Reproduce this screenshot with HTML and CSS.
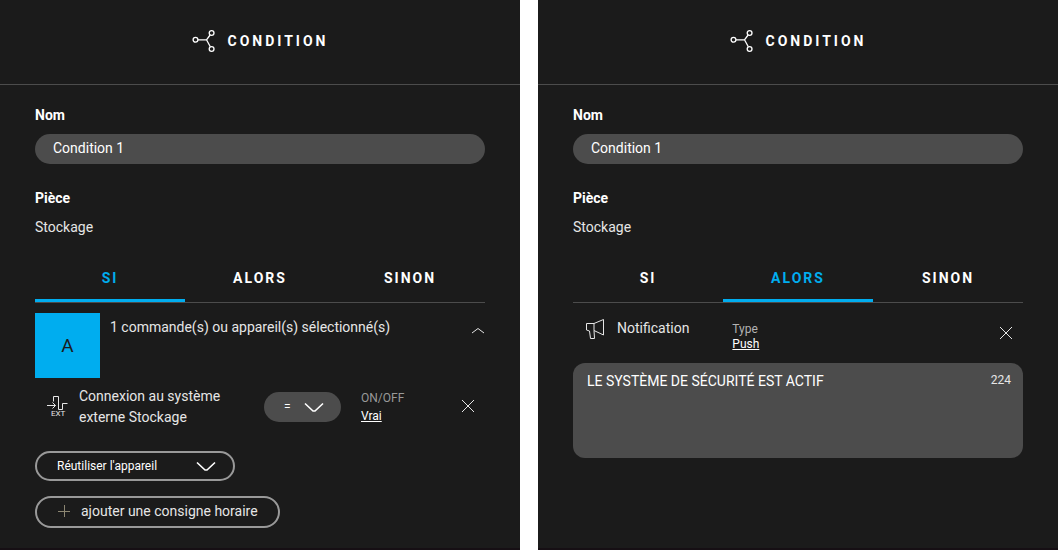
FILE: index.html
```
<!DOCTYPE html>
<html lang="fr">
<head>
  <meta charset="UTF-8">
  <meta name="viewport" content="width=device-width, initial-scale=1.0">
  <title>Condition</title>
  <link rel="stylesheet" href="styles.css">
</head>
<body>
  <main class="panels">
    <section class="panel">
      <header class="panel-header">
        <svg class="logo" width="24" height="24" viewBox="0 0 24 24">
          <circle cx="3.5" cy="10.8" r="2.4"/>
          <circle cx="19.6" cy="4" r="2.4"/>
          <circle cx="19.6" cy="20" r="2.4"/>
          <path d="M6 10.800h8.500l3.600-4.800M14.500 10.800l3.800 7"/>
        </svg>
        <h1>CONDITION</h1>
      </header>
      <div class="panel-body">
        <label class="label" for="nom-si">Nom</label>
        <input class="field" id="nom-si" type="text" value="Condition 1">
        <h2 class="label">Pièce</h2>
        <p class="room">Stockage</p>

        <nav class="tabs">
          <button class="tab active" type="button">SI</button>
          <button class="tab" type="button">ALORS</button>
          <button class="tab" type="button">SINON</button>
        </nav>

        <div class="summary">
          <div class="badge">A</div>
          <p>1 commande(s) ou appareil(s) sélectionné(s)</p>
          <button class="icon-btn" type="button" aria-label="Replier">
            <svg width="14" height="8" viewBox="0 0 14 8"><path d="M1 6l6-4.500 6 4.500"/></svg>
          </button>
        </div>

        <div class="device">
          <svg class="device-icon" width="22" height="22" viewBox="0 0 22 22">
            <path d="M1 9.500h8.500M6.500 6.500l3 3-3 3M7.500 5.500V.5h5v13h4v-6h5"/>
            <text x="5" y="20">EXT</text>
          </svg>
          <p class="device-name">Connexion au système externe Stockage</p>
          <div class="select operator">
            <select aria-label="Opérateur">
              <option>=</option>
              <option>≠</option>
            </select>
            <svg class="chevron" width="20" height="12" viewBox="0 0 20 12"><path d="M1 1.500l8 7.500h2l8-7.500"/></svg>
          </div>
          <div class="value">
            <span>ON/OFF</span>
            <a href="#valeur">Vrai</a>
          </div>
          <button class="icon-btn" type="button" aria-label="Supprimer">
            <svg width="14" height="14" viewBox="0 0 14 14"><path d="M1 0l12 12M13 0L1 12"/></svg>
          </button>
        </div>

        <div class="select reuse">
          <select aria-label="Réutiliser l'appareil">
            <option>Réutiliser l'appareil</option>
          </select>
          <svg class="chevron" width="20" height="12" viewBox="0 0 20 12"><path d="M1 1.500l8 7.500h2l8-7.500"/></svg>
        </div>

        <button class="add" type="button">
          <svg width="12" height="12" viewBox="0 0 12 12"><path d="M0 6.500h12M6.500 0v12"/></svg>
          ajouter une consigne horaire
        </button>
      </div>
    </section>

    <section class="panel">
      <header class="panel-header">
        <svg class="logo" width="24" height="24" viewBox="0 0 24 24">
          <circle cx="3.5" cy="10.8" r="2.4"/>
          <circle cx="19.6" cy="4" r="2.4"/>
          <circle cx="19.6" cy="20" r="2.4"/>
          <path d="M6 10.800h8.500l3.600-4.800M14.500 10.800l3.800 7"/>
        </svg>
        <h1>CONDITION</h1>
      </header>
      <div class="panel-body">
        <label class="label" for="nom-alors">Nom</label>
        <input class="field" id="nom-alors" type="text" value="Condition 1">
        <h2 class="label">Pièce</h2>
        <p class="room">Stockage</p>

        <nav class="tabs">
          <button class="tab" type="button">SI</button>
          <button class="tab active" type="button">ALORS</button>
          <button class="tab" type="button">SINON</button>
        </nav>

        <div class="notification">
          <svg class="device-icon" width="20" height="22" viewBox="0 0 20 22">
            <path d="M9 5.500l9.500-4v15.500l-9.500-4.500zM9 5.500h-7.500v6.500l3 1 1 7.500h4l-.5-8"/>
          </svg>
          <label for="message">Notification</label>
          <div class="value compact">
            <span>Type</span>
            <a href="#type">Push</a>
          </div>
          <button class="icon-btn" type="button" aria-label="Supprimer">
            <svg width="14" height="14" viewBox="0 0 14 14"><path d="M1 1l12 12M13 1L1 13"/></svg>
          </button>
        </div>

        <div class="message">
          <textarea id="message">LE SYSTÈME DE SÉCURITÉ EST ACTIF</textarea>
          <span class="counter">224</span>
        </div>
      </div>
    </section>
  </main>
</body>
</html>
```
FILE: styles.css
```
* {
  box-sizing: border-box;
}
body {
  margin: 0;
  background-color: #fff;
  color: #e6e6e6;
  font-family: Roboto, sans-serif;
  font-size: 14px;
  line-height: 20px;
}
h1, h2, p {
  margin: 0;
}
button, input, select, textarea {
  font: inherit;
  color: inherit;
}
button {
  padding: 0;
  border: none;
  background: none;
  cursor: pointer;
}
svg {
  display: block;
  flex: none;
  fill: none;
  stroke: #e6e6e6;
  stroke-width: 1;
}

.panels {
  display: grid;
  grid-template-columns: 1fr 1fr;
  gap: 18px;
  min-height: 100vh;
}
.panel {
  background-color: #1b1b1b;
  border-bottom: 2px solid #160f14;
}
.panel-header {
  display: flex;
  align-items: center;
  justify-content: center;
  gap: 12px;
  padding: 29px 0 31px;
  border-bottom: 1px solid #4c4c4c;
}
.panel-header h1 {
  color: #fff;
  font-size: 14px;
  font-weight: bold;
  letter-spacing: 3px;
}
.logo {
  stroke: #fff;
  stroke-width: 1.3;
}
.panel-body {
  padding: 20px 35px;
}

.label {
  display: block;
  color: #fff;
  font-size: 14px;
  font-weight: bold;
}
.field {
  display: block;
  width: 100%;
  height: 30px;
  margin: 9px 0 24px;
  padding: 0 18px 2px;
  border: none;
  border-radius: 15px;
  background-color: #4c4c4c;
  color: #fff;
}
.room {
  margin-top: 9px;
}

.tabs {
  display: flex;
  margin-top: 20px;
  border-bottom: 1px solid #4c4c4c;
}
.tab {
  flex: 1;
  padding: 11px 0;
  border-bottom: 3px solid transparent;
  color: #fff;
  font-weight: bold;
  letter-spacing: 2px;
}
.tab.active {
  border-color: #00adef;
  color: #00adef;
}

.icon-btn {
  display: flex;
}
.summary {
  display: flex;
  margin-top: 10px;
  gap: 10px;
}
.summary p {
  flex: 1;
  padding-top: 4px;
}
.summary .icon-btn {
  align-self: flex-start;
  padding-top: 14px;
}
.badge {
  display: flex;
  align-items: center;
  justify-content: center;
  width: 65px;
  height: 65px;
  background-color: #00adef;
  color: #1b1b1b;
  font-size: 19px;
}

.device {
  display: flex;
  align-items: center;
  margin-top: 8px;
  padding: 0 10px 0 11px;
}
.device-icon text {
  fill: #e6e6e6;
  stroke: none;
  font-size: 8px;
}
.device-name {
  flex: 1;
  padding: 0 20px 0 11px;
  line-height: 21px;
}

.select {
  position: relative;
}
.select select {
  width: 100%;
  height: 30px;
  padding: 0 20px;
  border: none;
  border-radius: 15px;
  background-color: #4c4c4c;
  color: #fff;
  font-size: 12px;
  appearance: none;
}
.chevron {
  position: absolute;
  top: 10px;
  right: 17px;
  stroke: #fff;
  stroke-width: 1.6;
  pointer-events: none;
}
.operator {
  width: 77px;
}
.reuse {
  width: 200px;
  margin-top: 23px;
}
.reuse select {
  border: 2px solid #999;
  background-color: transparent;
}
.reuse .chevron {
  right: 19px;
}

.value {
  display: flex;
  flex-direction: column;
  align-items: flex-start;
  width: 100px;
  margin-left: 20px;
  font-size: 12px;
  line-height: 18px;
}
.value span {
  color: #999;
}
.value a {
  color: #fff;
}
.value.compact {
  flex: 1;
  margin-left: 43px;
  line-height: 15px;
}
.value.compact span {
  color: #b3b3b3;
}

.add {
  display: flex;
  align-items: center;
  gap: 11px;
  height: 32px;
  margin-top: 15px;
  padding: 0 20px 2px 21px;
  border: 2px solid #999;
  border-radius: 16px;
}
.add svg {
  stroke: #8c8672;
}

.notification {
  display: flex;
  align-items: flex-start;
  margin-top: 15px;
  padding: 0 10px 0 12px;
}
.notification label {
  margin-left: 12px;
}
.notification .compact {
  padding-top: 4px;
}
.notification .icon-btn {
  padding-top: 8px;
}
.message {
  position: relative;
  margin-top: 11px;
}
.message textarea {
  display: block;
  width: 100%;
  height: 95px;
  padding: 8px 50px 8px 14px;
  border: none;
  border-radius: 12px;
  background-color: #4c4c4c;
  color: #fff;
  resize: none;
}
.counter {
  position: absolute;
  top: 7px;
  right: 12px;
  font-size: 12px;
}
```
